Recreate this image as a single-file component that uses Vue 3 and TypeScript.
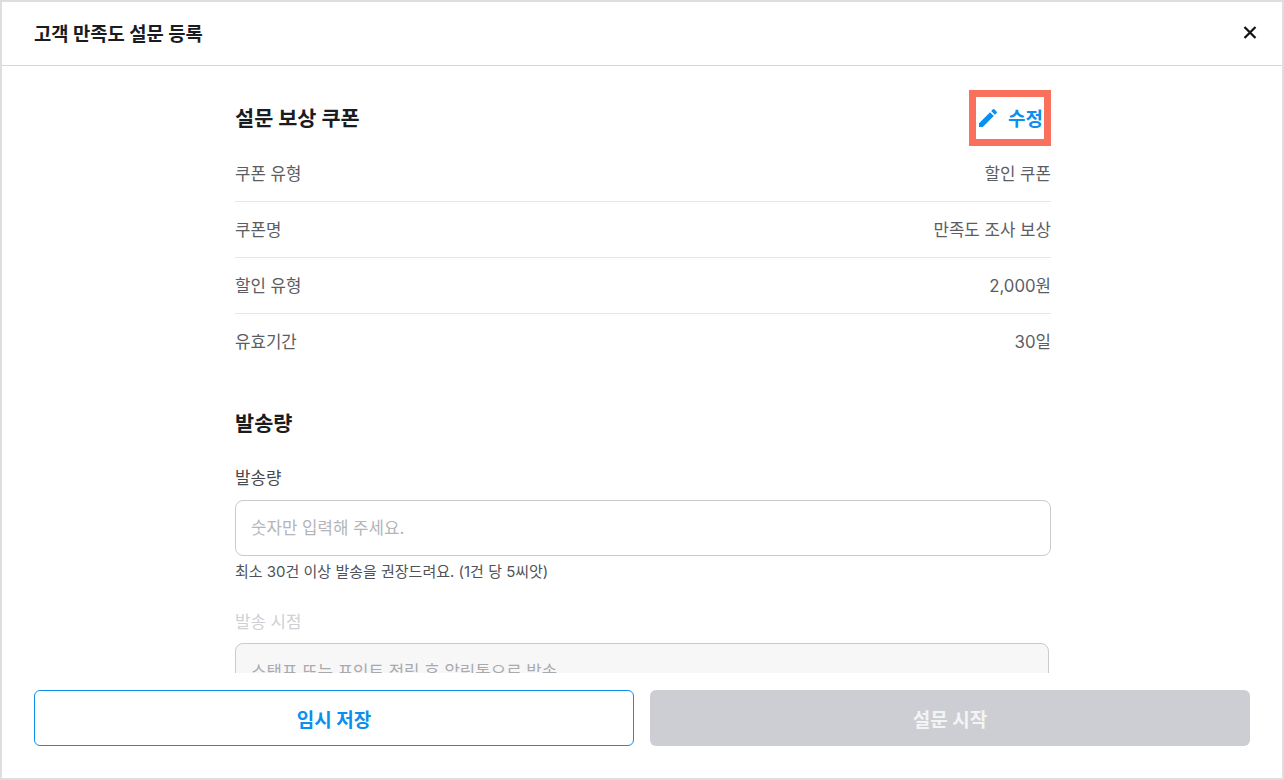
<template>
  <div class="modal">
    <header class="modal-header">
      <h1>고객 만족도 설문 등록</h1>
      <button class="close-button" aria-label="닫기">
        <svg width="24" height="24" viewBox="0 0 24 24">
          <path d="M6.5 6l11 11M17.5 6l-11 11" stroke="#111" stroke-width="2.2" fill="none" />
        </svg>
      </button>
    </header>

    <main class="modal-body">
      <div class="content">
        <section class="coupon">
          <div class="section-head">
            <h2>설문 보상 쿠폰</h2>
            <button class="edit-button">
              <svg width="24" height="24" viewBox="0 0 24 24">
                <path fill="#0a8fef" d="M3 17.25V21h3.75L17.81 9.94l-3.75-3.75L3 17.25zM20.71 7.04a1 1 0 0 0 0-1.41l-2.34-2.34a1 1 0 0 0-1.41 0l-1.83 1.83 3.75 3.75 1.83-1.83z" />
              </svg>
              수정
            </button>
          </div>
          <div v-for="row in couponRows" :key="row.label" class="info-row">
            <span>{{ row.label }}</span>
            <span>{{ row.value }}</span>
          </div>
        </section>

        <section class="volume">
          <h2>발송량</h2>
          <label class="field-label">발송량</label>
          <input class="text-input" type="text" placeholder="숫자만 입력해 주세요." />
          <p class="helper">최소 30건 이상 발송을 권장드려요. (1건 당 5씨앗)</p>
          <label class="field-label disabled">발송 시점</label>
          <div class="disabled-input">스탬프 또는 포인트 적립 후 알림톡으로 발송</div>
        </section>
      </div>
    </main>

    <footer class="modal-footer">
      <button class="btn btn-outline">임시 저장</button>
      <button class="btn btn-disabled">설문 시작</button>
    </footer>
  </div>
</template>

<script setup lang="ts">
interface CouponRow {
  label: string
  value: string
}

const couponRows: CouponRow[] = [
  { label: '쿠폰 유형', value: '할인 쿠폰' },
  { label: '쿠폰명', value: '만족도 조사 보상' },
  { label: '할인 유형', value: '2,000원' },
  { label: '유효기간', value: '30일' },
]
</script>

<style>
html,
body {
  margin: 0;
  background: #fff;
}
</style>

<style scoped>
.modal {
  box-sizing: border-box;
  width: 1284px;
  height: 780px;
  border: 2px solid #dedede;
  display: flex;
  flex-direction: column;
  overflow: hidden;
  background: #fff;
  color: #1b1c1f;
  font-family: Inter, "Noto Sans CJK KR", sans-serif;
}

.modal-header {
  flex: none;
  box-sizing: border-box;
  height: 64px;
  padding: 0 20px 1px 32px;
  display: flex;
  align-items: center;
  justify-content: space-between;
  border-bottom: 1px solid #d6d7da;
}

h1 {
  margin: 0 0 2px;
  font-size: 18.8px;
  font-weight: 700;
}

.close-button {
  width: 24px;
  height: 24px;
  padding: 0;
  border: none;
  background: transparent;
  cursor: pointer;
}

.modal-body {
  flex: 1;
  min-height: 0;
  overflow: hidden;
}

.content {
  width: 816px;
  margin: 0 auto;
  padding-top: 24px;
  transform: translateX(1px);
}

h2 {
  margin: 0;
  padding-top: 2px;
  font-size: 20.8px;
  line-height: 54px;
  font-weight: 700;
}

.section-head {
  display: flex;
  align-items: center;
  justify-content: space-between;
  height: 56px;
}

.edit-button {
  box-sizing: border-box;
  width: 82px;
  height: 56px;
  padding: 0 0 2px;
  display: flex;
  align-items: center;
  gap: 8px;
  border: 7px solid #f9705c;
  background: #fff;
  color: #0a8fef;
  font: inherit;
  font-size: 19px;
  font-weight: 700;
  white-space: nowrap;
  cursor: pointer;
}

.edit-button svg {
  margin-top: 2px;
}

.info-row {
  box-sizing: border-box;
  height: 56px;
  padding-bottom: 2px;
  display: flex;
  align-items: center;
  justify-content: space-between;
  font-size: 16.8px;
  color: #5b5d63;
  border-bottom: 1px solid #e6e7ea;
}

.info-row:last-child {
  border-bottom: none;
}

.volume {
  padding-top: 25px;
}

.field-label {
  display: block;
  margin-top: 15px;
  font-size: 16.8px;
  line-height: 24px;
  color: #46484d;
}

.field-label.disabled {
  margin-top: 28px;
  color: #cfd0d4;
}

.text-input {
  display: block;
  box-sizing: border-box;
  width: 100%;
  height: 56px;
  margin-top: 10px;
  padding: 0 15px;
  border: 1px solid #c9cace;
  border-radius: 8px;
  outline: none;
  font: inherit;
  font-size: 16.8px;
  color: #1b1c1f;
}

.text-input::placeholder {
  color: #b4b5b9;
}

.helper {
  margin: 6px 0 0;
  font-size: 15px;
  line-height: 20px;
  color: #505257;
}

.disabled-input {
  box-sizing: border-box;
  width: 814px;
  height: 56px;
  margin-top: 9px;
  padding: 0 15px;
  display: flex;
  align-items: center;
  border: 1px solid #c9cace;
  border-radius: 8px;
  background: #f7f7f8;
  font-size: 16.8px;
  color: #a9aaae;
}

.modal-footer {
  flex: none;
  height: 105px;
  box-sizing: border-box;
  padding: 17px 32px 32px;
  display: grid;
  grid-template-columns: 1fr 1fr;
  gap: 16px;
  background: #fff;
}

.btn {
  height: 56px;
  box-sizing: border-box;
  border-radius: 6px;
  font: inherit;
  font-size: 19px;
  font-weight: 700;
  cursor: pointer;
}

.btn-outline {
  border: 1px solid #0a8fef;
  background: #fff;
  color: #0a8fef;
}

.btn-disabled {
  border: none;
  background: #cdced3;
  color: #f4f4f5;
}
</style>
